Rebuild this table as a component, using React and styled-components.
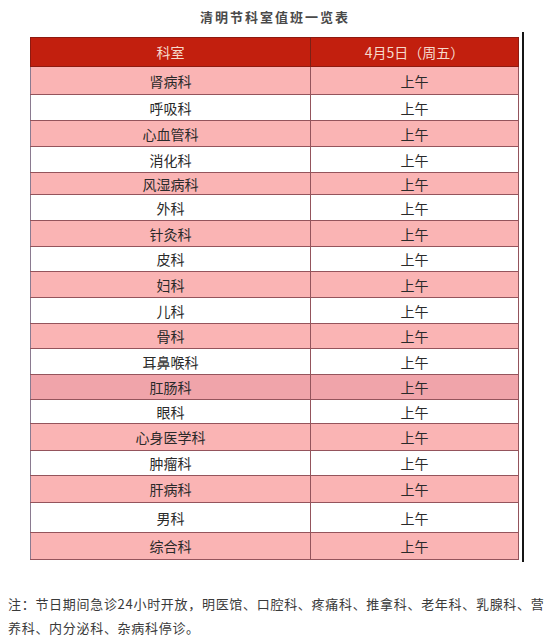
import React from 'react';
import styled, { createGlobalStyle } from 'styled-components';

const GlobalStyle = createGlobalStyle`
  html, body {
    margin: 0;
    padding: 0;
    background: #fff;
  }
  body {
    font-family: "Noto Sans CJK SC", "Noto Sans", sans-serif;
  }
`;

const Page = styled.div`
  width: 550px;
  height: 640px;
  overflow: hidden;
  background: #fff;
`;

const Title = styled.h1`
  margin: 0;
  height: 32px;
  display: flex;
  align-items: center;
  justify-content: center;
  font-size: 13px;
  font-weight: 700;
  letter-spacing: 2px;
  color: #4a4a4a;
`;

const Frame = styled.div`
  margin-left: 30px;
  width: 488px;
  padding: 5px 4px 2px 0;
  border-right: 2px solid #151515;
`;

const Table = styled.table`
  width: 488px;
  border-collapse: collapse;
  table-layout: fixed;
  font-size: 14px;
`;

const HeadCell = styled.th`
  height: 28px;
  padding: 0;
  background: #c21f0e;
  color: #f6d9cc;
  font-weight: 400;
  border: 1px solid #8e1a10;
  border-right-color: ${p => (p.$last ? '#8e1a10' : '#7a2016')};
`;

const Row = styled.tr`
  height: ${p => p.$h}px;
  background: ${p => p.$tone};
`;

const Cell = styled.td`
  padding: 0;
  text-align: center;
  color: #2a2a2a;
  border: 1px solid #94545c;
  border-left-color: ${p => (p.$first ? '#8a7a90' : '#94545c')};
`;

const Note = styled.p`
  margin: 30px 0 0 8px;
  font-size: 13px;
  line-height: 24px;
  letter-spacing: 0.7px;
  color: #3a3a3a;
`;

const PINK = '#fab4b4';
const WHITE = '#ffffff';

const rows = [
  ['肾病科', 28, PINK],
  ['呼吸科', 26, WHITE],
  ['心血管科', 26, PINK],
  ['消化科', 26, WHITE],
  ['风湿病科', 22, PINK],
  ['外科', 26, WHITE],
  ['针灸科', 26, PINK],
  ['皮科', 25, WHITE],
  ['妇科', 26, PINK],
  ['儿科', 26, WHITE],
  ['骨科', 25, PINK],
  ['耳鼻喉科', 26, WHITE],
  ['肛肠科', 25, '#f0a4aa'],
  ['眼科', 24, WHITE],
  ['心身医学科', 27, PINK],
  ['肿瘤科', 25, WHITE],
  ['肝病科', 27, PINK],
  ['男科', 30, WHITE],
  ['综合科', 27, PINK],
];

export default function App() {
  return (
    <Page>
      <GlobalStyle />
      <Title>清明节科室值班一览表</Title>
      <Frame>
        <Table>
          <colgroup>
            <col style={{ width: 280 }} />
            <col style={{ width: 208 }} />
          </colgroup>
          <thead>
            <tr>
              <HeadCell>科室</HeadCell>
              <HeadCell $last>4月5日（周五）</HeadCell>
            </tr>
          </thead>
          <tbody>
            {rows.map(([name, h, tone]) => (
              <Row key={name} $h={h} $tone={tone}>
                <Cell $first>{name}</Cell>
                <Cell>上午</Cell>
              </Row>
            ))}
          </tbody>
        </Table>
      </Frame>
      <Note>
        注：节日期间急诊24小时开放，明医馆、口腔科、疼痛科、推拿科、老年科、乳腺科、营
        <br />
        养科、内分泌科、杂病科停诊。
      </Note>
    </Page>
  );
}
